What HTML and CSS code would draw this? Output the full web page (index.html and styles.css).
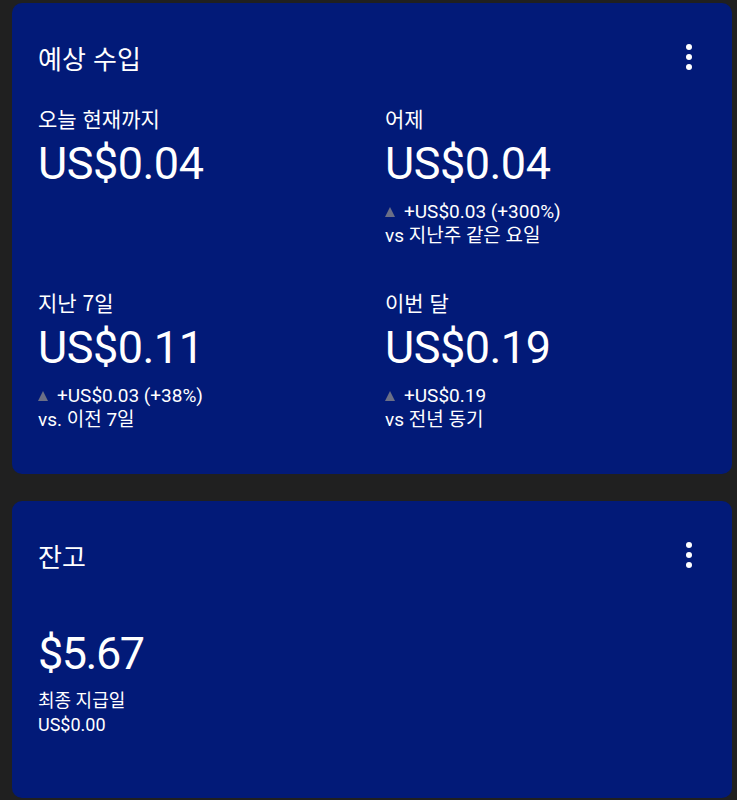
FILE: index.html
```html
<!DOCTYPE html>
<html lang="ko">
<head>
    <meta charset="UTF-8">
    <meta name="viewport" content="width=device-width, initial-scale=1.0">
    <title>예상 수입</title>
    <link rel="stylesheet" href="styles.css">
</head>
<body>
    <div class="card earnings">
        <div class="card-header">
            <h2>예상 수입</h2>
            <button class="more" aria-label="더보기"><span></span><span></span><span></span></button>
        </div>
        <div class="stats">
            <div class="stat">
                <div class="label">오늘 현재까지</div>
                <div class="amount">US$0.04</div>
            </div>
            <div class="stat">
                <div class="label">어제</div>
                <div class="amount">US$0.04</div>
                <div class="delta"><span class="arrow"></span>+US$0.03 (+300%)</div>
                <div class="compare">vs 지난주 같은 요일</div>
            </div>
            <div class="stat">
                <div class="label">지난 7일</div>
                <div class="amount">US$0.11</div>
                <div class="delta"><span class="arrow"></span>+US$0.03 (+38%)</div>
                <div class="compare">vs. 이전 7일</div>
            </div>
            <div class="stat">
                <div class="label">이번 달</div>
                <div class="amount">US$0.19</div>
                <div class="delta"><span class="arrow"></span>+US$0.19</div>
                <div class="compare">vs 전년 동기</div>
            </div>
        </div>
    </div>

    <div class="card balance">
        <div class="card-header">
            <h2>잔고</h2>
            <button class="more" aria-label="더보기"><span></span><span></span><span></span></button>
        </div>
        <div class="amount balance-amount">$5.67</div>
        <div class="note">최종 지급일</div>
        <div class="note">US$0.00</div>
    </div>
</body>
</html>
```

FILE: styles.css
```css
body {
    margin: 0;
    padding: 3px 5px 0 12px;
    background-color: #202020;
    font-family: Roboto, "Noto Sans CJK KR", sans-serif;
    color: #ffffff;
}

.card {
    background: #021a78;
    border-radius: 10px;
    padding: 38px 26px 42px;
    box-sizing: border-box;
}

.balance {
    margin-top: 27px;
    min-height: 297px;
}

.card-header {
    display: flex;
    justify-content: space-between;
    align-items: center;
    height: 32px;
}

h2 {
    margin: 0;
    font-size: 26px;
    font-weight: 400;
    font-family: "Noto Sans CJK KR", sans-serif;
}

.more {
    background: none;
    border: none;
    padding: 0;
    margin-right: 14px;
    display: flex;
    flex-direction: column;
    gap: 4px;
    cursor: pointer;
}

.more span {
    width: 6px;
    height: 6px;
    border-radius: 50%;
    background: #ffffff;
}

.stats {
    display: grid;
    grid-template-columns: 347px 1fr;
    row-gap: 41px;
    margin-top: 32px;
}

.label {
    font-family: "Noto Sans CJK KR", sans-serif;
    font-size: 21px;
    line-height: 26px;
    margin-bottom: 8px;
}

.amount {
    font-size: 45px;
    line-height: 50px;
    letter-spacing: -0.5px;
}

.delta {
    display: flex;
    align-items: center;
    font-size: 19px;
    line-height: 24px;
    margin-top: 11px;
}

.arrow {
    width: 0;
    height: 0;
    border-left: 5px solid transparent;
    border-right: 5px solid transparent;
    border-bottom: 10px solid #6b6f86;
    margin-right: 9px;
}

.compare {
    font-size: 19px;
    line-height: 24px;
}

.balance-amount {
    margin-top: 58px;
    margin-bottom: 10px;
    letter-spacing: -1.5px;
}

.note {
    font-size: 18px;
    line-height: 24px;
}
```
